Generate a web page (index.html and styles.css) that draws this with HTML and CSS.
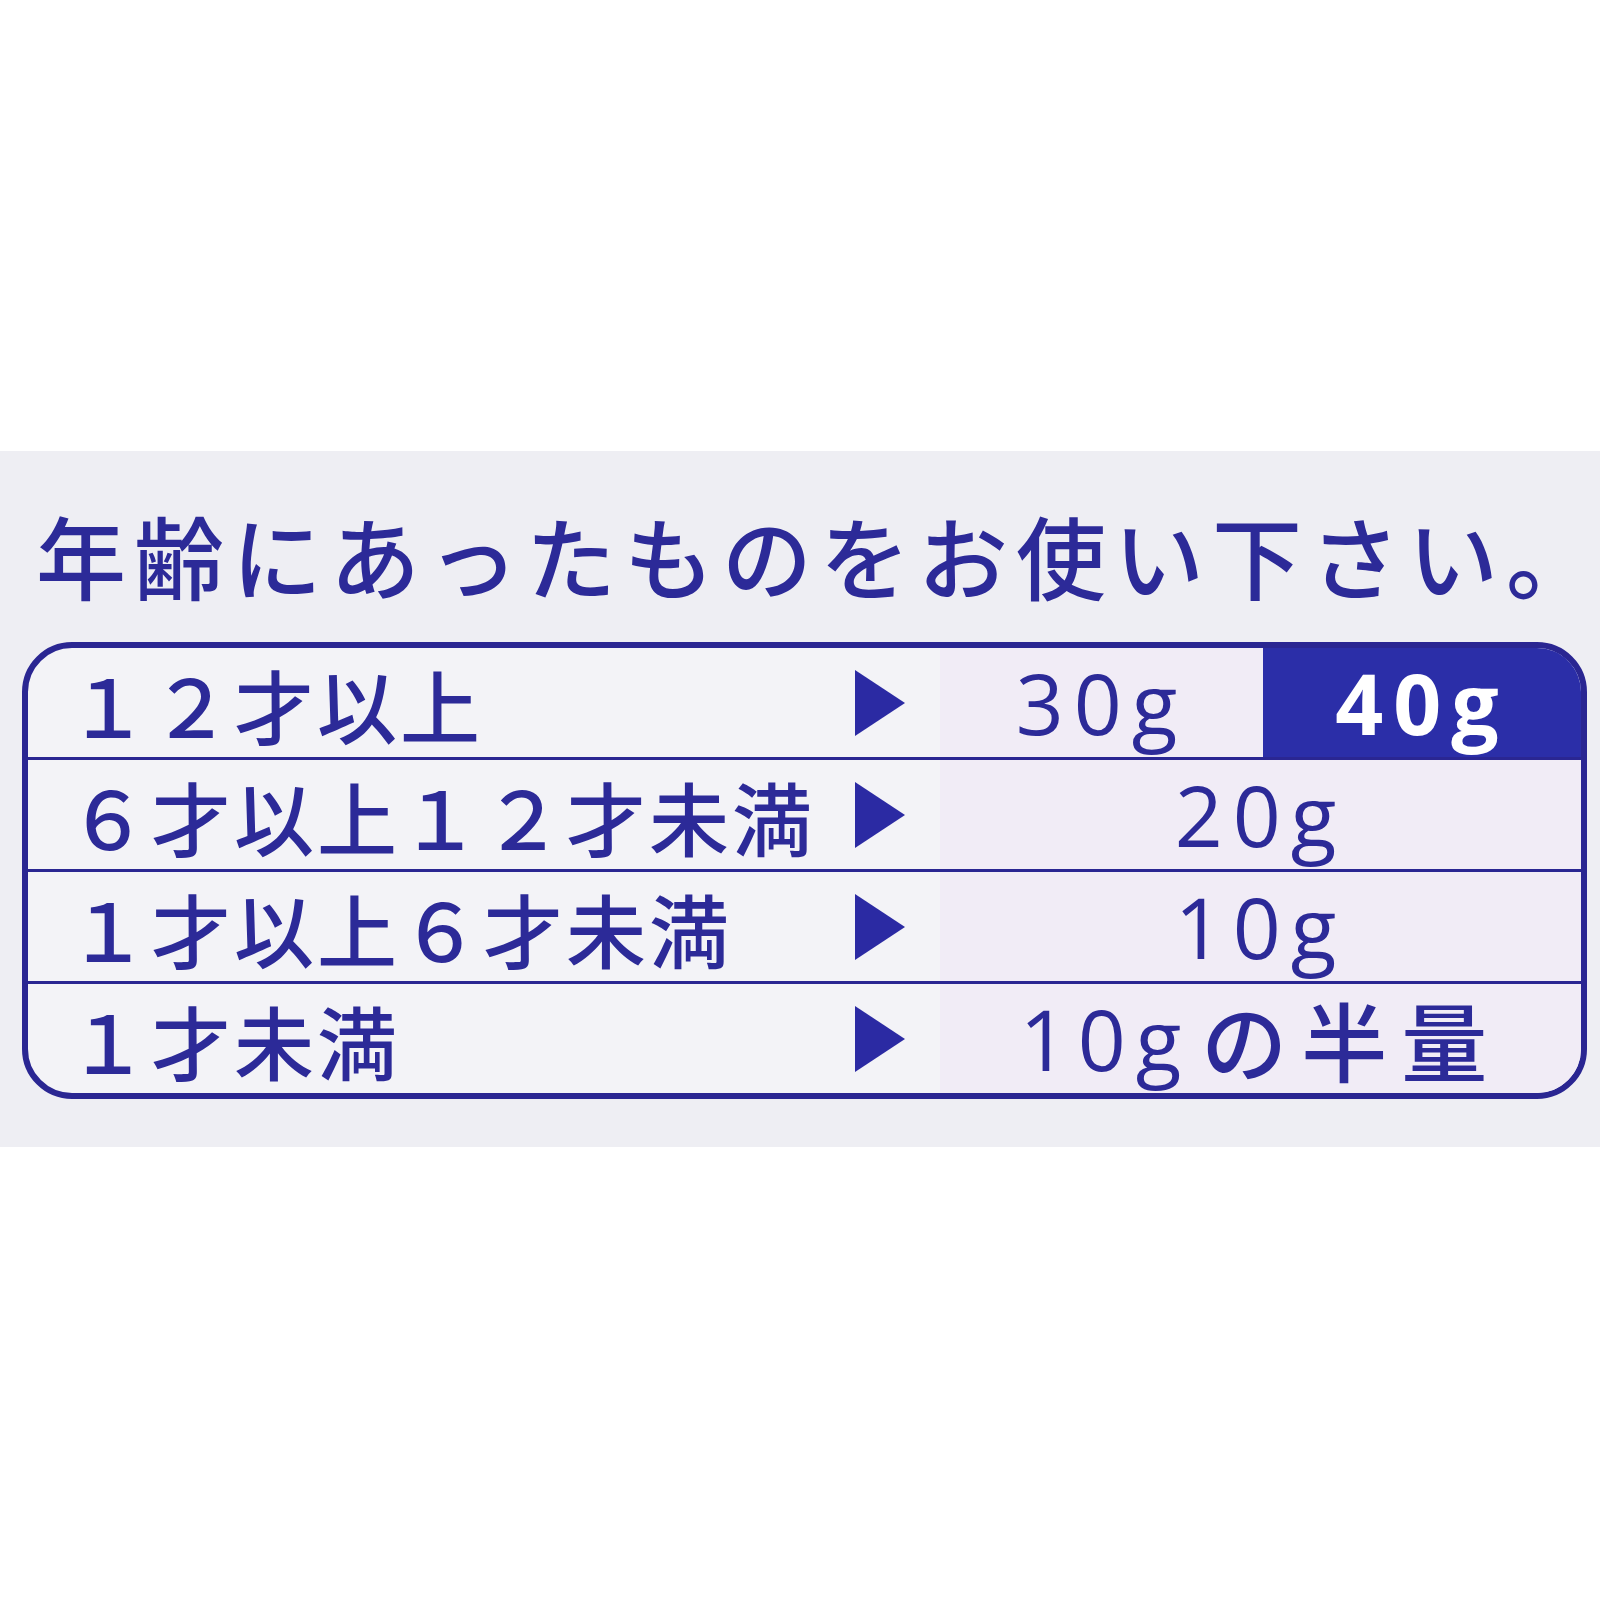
FILE: index.html
```html
<!DOCTYPE html>
<html lang="ja">
<head>
<meta charset="utf-8">
<title>年齢にあったものをお使い下さい。</title>
<link rel="stylesheet" href="styles.css">
</head>
<body>
<div class="top"></div>
<section class="panel">
  <h1 class="title">年齢にあったものをお使い下さい<span class="stop">。</span></h1>
  <div class="table">
    <div class="row">
      <div class="label"><span class="label-text">12才以上</span><svg class="arrow" viewBox="0 0 50 66"><polygon points="0,0 50,33 0,66"/></svg></div>
      <div class="value half">30g</div>
      <div class="value dark">40g</div>
    </div>
    <div class="row">
      <div class="label"><span class="label-text">6才以上12才未満</span><svg class="arrow" viewBox="0 0 50 66"><polygon points="0,0 50,33 0,66"/></svg></div>
      <div class="value">20g</div>
    </div>
    <div class="row">
      <div class="label"><span class="label-text">1才以上6才未満</span><svg class="arrow" viewBox="0 0 50 66"><polygon points="0,0 50,33 0,66"/></svg></div>
      <div class="value">10g</div>
    </div>
    <div class="row">
      <div class="label"><span class="label-text">1才未満</span><svg class="arrow" viewBox="0 0 50 66"><polygon points="0,0 50,33 0,66"/></svg></div>
      <div class="value">10g<span class="cjk">の半量</span></div>
    </div>
  </div>
</section>
</body>
</html>
```

FILE: styles.css
```css
html, body {
  margin: 0;
  padding: 0;
  background: #ffffff;
}
body {
  font-family: "Noto Sans CJK JP", "Noto Sans", sans-serif;
  color: #2c2a98;
}
.top {
  height: 451px;
}
.panel {
  height: 696px;
  box-sizing: border-box;
  background: #eeeef3;
  padding-top: 57px;
}
.title {
  margin: 0 0 0 36px;
  font-size: 90px;
  line-height: 92px;
  font-weight: 500;
  letter-spacing: 8px;
  white-space: nowrap;
  color: #2c2a98;
}
.stop {
  letter-spacing: 0;
}
.table {
  margin: 42px 13px 0 22px;
  border: 6px solid #2a2692;
  border-radius: 50px;
  overflow: hidden;
  background: #f3f3f7;
}
.row {
  display: flex;
  height: 109px;
  border-bottom: 3px solid #2a2692;
}
.row:last-child {
  border-bottom: none;
}
.label {
  width: 912px;
  flex: none;
  display: flex;
  align-items: center;
  box-sizing: border-box;
  padding-left: 40px;
  padding-right: 35px;
}
.label-text {
  font-size: 80px;
  line-height: 1;
  font-weight: 500;
  letter-spacing: 3px;
  font-feature-settings: "fwid" 1;
  white-space: nowrap;
  color: #2c2a98;
}
.arrow {
  width: 50px;
  height: 66px;
  margin-left: auto;
  fill: #2b2aa3;
}
.value {
  flex: 1;
  display: flex;
  align-items: center;
  justify-content: center;
  background: #f1ecf6;
  font-family: "Open Sans", "Noto Sans CJK JP", sans-serif;
  font-size: 84px;
  line-height: 1;
  font-weight: 500;
  letter-spacing: 10px;
  color: #2c2a98;
  white-space: nowrap;
}
.cjk {
  margin-left: 10px;
  font-family: "Noto Sans CJK JP", sans-serif;
  font-size: 86px;
  font-weight: 500;
  letter-spacing: 14px;
}
.value.half {
  flex: none;
  width: 323px;
}
.value.dark {
  background: #2b2ea8;
  color: #ffffff;
  font-weight: 700;
}
```
